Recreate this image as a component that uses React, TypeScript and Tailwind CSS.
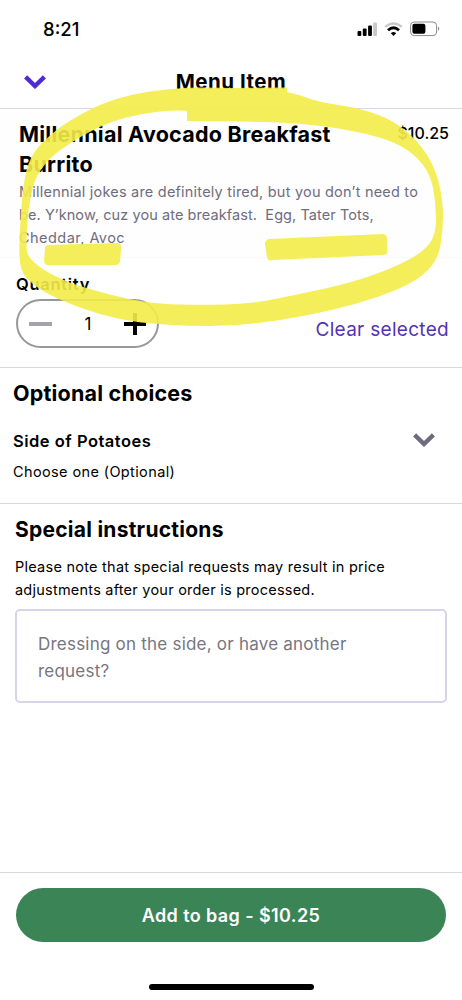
import { useState } from "react";

type Point = [number, number];

const Chevron = ({ className }: { className: string }) => (
  <svg viewBox="0 0 22 14" className={`w-[22px] h-[14px] ${className}`} fill="none">
    <path d="M1.6 1.9 11 11 20.4 1.9" stroke="currentColor" strokeWidth="4.4" />
  </svg>
);

const StatusBar = () => (
  <div className="flex h-[58px] items-center justify-between pl-[43px] pr-[22px]">
    <span className="text-[18.5px] leading-6 font-medium">8:21</span>
    <div className="flex items-center gap-[7px]">
      <svg viewBox="0 0 21 14" className="w-[21px] h-[14px]">
        <rect x="1.5" y="9" width="3.8" height="5" rx="1" />
        <rect x="6.8" y="6.6" width="3.8" height="7.4" rx="1" />
        <rect x="12.1" y="3.6" width="3.8" height="10.4" rx="1" />
        <rect x="17.2" y="0.4" width="3.8" height="13.6" rx="1" fill="#c9c9c9" />
      </svg>
      <svg viewBox="0 0 19 14" className="w-[19px] h-[14px]" fill="none">
        <path d="M1.2 4.9Q9.5-2 17.8 4.9" stroke="#c9c9c9" strokeWidth="2.5" />
        <path d="M4 8.3Q9.5 3.2 15 8.3" stroke="#000" strokeWidth="2.8" />
        <path d="M6.8 11.2Q9.5 8.8 12.2 11.2L9.5 14Z" fill="#000" />
      </svg>
      <svg viewBox="0 0 30 16" className="w-[30px] h-[16px]">
        <rect x="0.6" y="1" width="26" height="13.6" rx="3.6" fill="none" stroke="#8c8c8c" />
        <rect x="2.4" y="2.8" width="13" height="10" rx="2" />
        <path d="M28 5.6q2.6 2.2 0 4.4z" fill="#8c8c8c" />
      </svg>
    </div>
  </div>
);

const outerEdge: Point[] = [
  [200, 87], [287, 90], [317, 102], [360, 108], [397, 122], [423, 147], [437, 173], [443, 203], [443, 230],
  [438, 260], [417, 281], [377, 298], [333, 310], [283, 320], [233, 326], [187, 326], [140, 323], [100, 315],
  [60, 300], [37, 288], [22, 274], [19, 257], [20, 225], [24, 176], [33, 152], [50, 135], [67, 122], [100, 104],
  [133, 94], [167, 89],
];

const innerEdge: Point[] = [
  [187, 109], [233, 121], [300, 123], [350, 130], [390, 140], [413, 153], [430, 173], [436, 203], [436, 235],
  [423, 252], [393, 268], [350, 283], [300, 294], [250, 304], [200, 305], [160, 304], [127, 299], [93, 290],
  [67, 282], [43, 270], [28, 257], [26, 245], [28, 210], [34, 180], [47, 161], [60, 150], [83, 135], [110, 122],
  [143, 113],
];

// closed curve that runs smoothly past the given points
const smooth = (points: Point[]) => {
  const mid = (a: Point, b: Point) => `${(a[0] + b[0]) / 2} ${(a[1] + b[1]) / 2}`;
  const last = points[points.length - 1];
  return (
    `M${mid(last, points[0])}` +
    points.map((p, i) => `Q${p[0]} ${p[1]} ${mid(p, points[(i + 1) % points.length])}`).join("") +
    "Z"
  );
};

// highlighter marks lying over the whole page
const Highlighter = () => (
  <svg viewBox="0 0 462 1000" className="pointer-events-none absolute inset-0 w-[462px] h-[1000px]">
    <g fill="#f5ed4a" opacity="0.9">
      <path fillRule="evenodd" d={smooth(outerEdge) + smooth(innerEdge)} />
      <path d="M187 88.500L287 87.500V105L285 122L187 121Z" />
      <path d="M48 245L118 243Q122 244 121 249L120 262Q119 265 115 265H48Q44 265 44 260L45 248Q45 245 48 245Z" />
      <path d="M269 239L383 234Q386 234 387 238L387 252Q387 255 383 255L273 260Q268 262 267 257L265 244Q265 240 269 239Z" />
    </g>
  </svg>
);

export default function App() {
  const [quantity, setQuantity] = useState(1);

  return (
    <div className="relative flex h-[1000px] w-[462px] flex-col overflow-hidden bg-white font-['Inter','Liberation_Sans',sans-serif] text-black">
      <StatusBar />

      <header className="grid h-[51px] grid-cols-[1fr_auto_1fr] items-center border-b border-[#d8d7e6] px-6 pb-[3px]">
        <button>
          <Chevron className="text-[#4f2bd5]" />
        </button>
        <h1 className="text-[20.5px] leading-6 font-bold tracking-[0.5px] whitespace-nowrap">Menu Item</h1>
      </header>

      <section className="h-[149px] border-b border-[#f8f8fa] bg-[#fefefe] pt-[11px] pl-[19px] pr-[13px]">
        <div className="flex items-start justify-between">
          <h2 className="text-[21.5px] leading-[29.5px] font-bold tracking-[0.25px] whitespace-nowrap">
            Millennial Avocado Breakfast
            <br />
            Burrito
          </h2>
          <span className="pt-[1px] text-[16px] leading-6 font-medium">$10.25</span>
        </div>
        <p className="pt-px text-[14.5px] leading-[23px] whitespace-pre text-[#6f6d7d]">
          <span className="block tracking-[0.21px]">Millennial jokes are definitely tired, but you don’t need to</span>
          <span className="block tracking-[0.08px]">be. Y’know, cuz you ate breakfast.  Egg, Tater Tots,</span>
          <span className="block tracking-[0.45px]">Cheddar, Avoc</span>
        </p>
      </section>

      <section className="flex h-[110px] items-end justify-between border-b border-[#d8d7e6] pr-[13px] pb-[19px] pl-4">
        <div>
          <h3 className="text-[16.5px] leading-6 font-semibold tracking-[0.7px]">Quantity</h3>
          <div className="mt-[3px] flex h-[49px] w-[143px] items-center justify-between rounded-full border-2 border-[#98979c] px-[11px]">
            <button onClick={() => setQuantity(Math.max(1, quantity - 1))}>
              <span className="block h-1 w-[23px] bg-[#a5a4ab]" />
            </button>
            <span className="text-[17px] leading-6">{quantity}</span>
            <button onClick={() => setQuantity(quantity + 1)}>
              <svg viewBox="0 0 22 22" className="w-[22px] h-[22px]">
                <path d="M0 11H22M11 0V22" stroke="#000" strokeWidth="4" />
              </svg>
            </button>
          </div>
        </div>
        <button className="mb-[6px] text-[19px] leading-6 tracking-[0.3px] whitespace-nowrap text-[#5433b4]">Clear selected</button>
      </section>

      <section className="h-[136px] border-b border-[#d8d7e6] pt-[9px] pr-[27px] pl-[13px]">
        <h2 className="text-[21.5px] leading-8 font-bold tracking-[0.2px]">Optional choices</h2>
        <div className="flex items-start justify-between pt-[20px]">
          <div>
            <h3 className="text-[16.5px] leading-6 font-semibold tracking-[0.5px]">Side of Potatoes</h3>
            <p className="pt-[7px] text-[14.5px] leading-6 tracking-[0.38px]">Choose one (Optional)</p>
          </div>
          <Chevron className="mt-[4px] text-[#6d6b80]" />
        </div>
      </section>

      <section className="flex-1 pt-[10px] px-[15px]">
        <h2 className="text-[21px] leading-8 font-bold tracking-[0.25px]">Special instructions</h2>
        <p className="pt-[9px] text-[14.5px] leading-[23px] whitespace-nowrap">
          <span className="block tracking-[0.25px]">Please note that special requests may result in price</span>
          <span className="block tracking-[0.23px]">adjustments after your order is processed.</span>
        </p>
        <div className="mt-[8px] h-[94px] rounded-[5px] border-[2.5px] border-[#d6d4e8] px-[21px] pt-[20px] text-[17px] leading-[27px] tracking-[0.22px] whitespace-nowrap text-[#77757f]">
          <span className="block">Dressing on the side, or have another</span>
          <span className="block">request?</span>
        </div>
      </section>

      <footer className="flex h-[128px] flex-col items-center border-t border-[#d8d7e6] pt-[15px]">
        <button className="h-[54px] w-[430px] rounded-full bg-[#3b8456] text-[18px] font-semibold tracking-[0.4px] text-white">
          Add to bag - $10.25
        </button>
        <div className="mt-[42px] h-[6px] w-[165px] rounded-full bg-black" />
      </footer>

      <Highlighter />
    </div>
  );
}
